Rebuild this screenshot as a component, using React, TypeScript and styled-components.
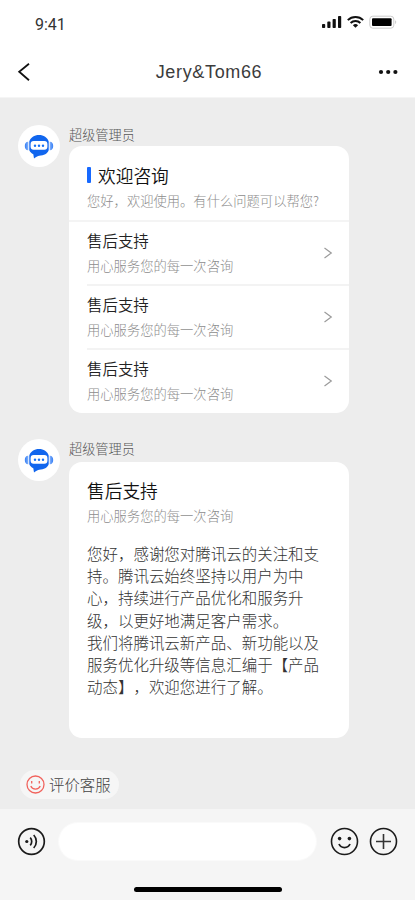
import React from 'react';
import styled, { createGlobalStyle } from 'styled-components';

const GlobalStyle = createGlobalStyle`
  * { box-sizing: border-box; }
  body { margin: 0; background: #ededed; }
  #root { width: 415px; }
`;

const Screen = styled.div`
  width: 415px;
  height: 900px;
  display: flex;
  flex-direction: column;
  overflow: hidden;
  background: #ededed;
  color: #222;
  font-family: 'Noto Sans CJK SC', sans-serif;
  font-weight: 300;
  text-spacing-trim: space-all;
`;

const StatusBar = styled.div`
  height: 48px;
  flex: none;
  display: flex;
  justify-content: space-between;
  padding: 14px 18px 0 35px;
  background: #fff;
`;

const Clock = styled.span`
  font: 400 16px/22px Roboto, sans-serif;
  color: #333;
`;

const StatusIcons = styled.div`
  display: flex;
  gap: 5px;
  height: 16px;
`;

const NavBar = styled.header`
  height: 50px;
  flex: none;
  display: grid;
  grid-template-columns: 60px 1fr 60px;
  align-items: center;
  background: #fff;
  border-bottom: 1px solid #f5f5f5;
`;

const NavButton = styled.button<{ $end?: boolean }>`
  display: flex;
  justify-content: ${p => (p.$end ? 'flex-end' : 'flex-start')};
  padding: 0 16px;
  margin-top: -2px;
  border: 0;
  background: none;
`;

const NavTitle = styled.h1`
  margin: 0 0 2px;
  text-align: center;
  font: 400 18px/24px 'Liberation Sans', sans-serif;
  letter-spacing: 0.65px;
  padding-left: 3px;
  color: #3c3c3c;
`;

const Thread = styled.main`
  flex: 1;
  padding: 27px 18px 0;
`;

const Message = styled.section<{ $last?: boolean }>`
  display: flex;
  gap: 9px;
  margin-bottom: ${p => (p.$last ? 32 : 26)}px;
`;

const Avatar = styled.div`
  width: 42px;
  height: 42px;
  flex: none;
  border-radius: 50%;
  background: #fff;
`;

const Bubble = styled.div`
  width: 280px;
`;

const Sender = styled.div<{ $gap: number }>`
  height: 20px;
  margin-bottom: ${p => p.$gap}px;
  font-size: 13.2px;
  line-height: 20px;
  color: #555;
`;

const Card = styled.div<{ $height: number }>`
  height: ${p => p.$height}px;
  border-radius: 13px;
  background: #fff;
  overflow: hidden;
`;

const CardHead = styled.div`
  height: 75.5px;
  padding: 16px 18px 0;
  border-bottom: 2px solid #f4f4f4;
`;

const Heading = styled.h2<{ $bar?: boolean }>`
  display: flex;
  align-items: center;
  gap: 7px;
  margin: 0 0 3px;
  font-size: 17.7px;
  line-height: 26px;
  font-weight: 350;
  color: #111;
  &::before {
    content: '';
    display: ${p => (p.$bar ? 'block' : 'none')};
    width: 4px;
    height: 16px;
    border-radius: 1px;
    background: #1769ff;
  }
`;

const Caption = styled.p`
  margin: 0;
  font-size: 13.3px;
  line-height: 20px;
  color: #8d8d8d;
  white-space: nowrap;
`;

const TopicRow = styled.div<{ $divided: boolean }>`
  height: 64.2px;
  margin-left: 18px;
  padding: 6px 16px 0 0;
  display: flex;
  justify-content: space-between;
  border-bottom: ${p => (p.$divided ? '2px solid #f3f3f3' : '0')};
  svg { margin-top: 18px; }
`;

const TopicTitle = styled.h3`
  margin: 0 0 4px;
  font-size: 15.45px;
  line-height: 24px;
  font-weight: 350;
  color: #222;
`;

const Article = styled.div`
  padding: 15px 18px 0;
`;

const Body = styled.div`
  margin-top: 16px;
  font-size: 15.48px;
  line-height: 22.2px;
  color: #333;
  white-space: pre;
`;

const RateButton = styled.button`
  display: flex;
  align-items: center;
  gap: 4px;
  width: 99px;
  height: 29px;
  margin-left: 2px;
  padding: 0 0 2px 6px;
  border: 0;
  border-radius: 15px;
  background: #f6f6f6;
  color: #444;
  font: 300 15.4px/24px 'Noto Sans CJK SC', sans-serif;
  white-space: nowrap;
  svg { margin-top: 2px; }
`;

const Composer = styled.footer`
  height: 91px;
  flex: none;
  display: flex;
  flex-direction: column;
  align-items: center;
  background: #f5f5f5;
`;

const InputRow = styled.div`
  width: 100%;
  display: flex;
  align-items: center;
  padding: 13px 17px 0;
`;

const TextInput = styled.input`
  width: 260px;
  height: 39px;
  margin: 0 13px 0 12px;
  padding: 0 16px;
  border: 1px solid #fafafa;
  border-radius: 20px;
  background: #fff;
  outline: none;
`;

const IconButton = styled.button<{ $gap?: number }>`
  display: flex;
  width: 29px;
  height: 29px;
  margin-right: ${p => p.$gap ?? 0}px;
  padding: 0;
  border: 0;
  background: none;
`;

const HomeIndicator = styled.div`
  width: 148px;
  height: 5px;
  margin: 26px 0 0 1px;
  border-radius: 3px;
  background: #000;
`;

const SignalIcon = () => (
  <svg width="20" height="14" viewBox="0 0 20 14" fill="#111">
    <rect x="0" y="10" width="3.2" height="4" rx="0.8" />
    <rect x="5.3" y="7.6" width="3.2" height="6.4" rx="0.8" />
    <rect x="10.6" y="5" width="3.2" height="9" rx="0.8" />
    <rect x="16" y="2" width="3.2" height="12" rx="0.8" />
  </svg>
);

const WifiIcon = () => (
  <svg width="17" height="14" viewBox="0 0 17 14" fill="none" stroke="#111" strokeWidth="2">
    <path d="M.8 6.1a11 11 0 0 1 15.4 0M3.6 9a7 7 0 0 1 9.8 0" />
    <path d="M8.5 13.8 5.9 11.2a3.8 3.8 0 0 1 5.2 0z" fill="#111" stroke="none" />
  </svg>
);

const BatteryIcon = () => (
  <svg width="28" height="16" viewBox="0 0 28 16">
    <rect x=".8" y="2.2" width="24" height="12" rx="3" fill="#fff" stroke="#ccc" />
    <rect x="3" y="4.3" width="19.6" height="7.8" rx="1" fill="#000" />
    <path d="M26.3 6.3c1.2.5 1.2 3.2 0 3.7z" fill="#bbb" />
  </svg>
);

const BackIcon = () => (
  <svg width="16" height="20" viewBox="0 0 16 20" fill="none" stroke="#111" strokeWidth="1.8">
    <path d="M13 1.7 3.2 9.7l9.8 8.5" />
  </svg>
);

const MoreIcon = () => (
  <svg width="21" height="6" viewBox="0 0 21 6" fill="#111">
    <circle cx="3" cy="3" r="2.1" />
    <circle cx="10.2" cy="3" r="2.1" />
    <circle cx="17.4" cy="3" r="2.1" />
  </svg>
);

const BotIcon = () => (
  <svg width="42" height="42" viewBox="0 0 42 42">
    <path d="M11.3 16.5C12.6 12.4 16.3 10 21 10s8.4 2.4 9.7 6.5v8.8c-1.3 3.4-4.6 5.3-9.5 5.4-1.4 0-2.5.8-5.2 2.8l-.7-4.2c-1.9-.9-3.2-2.3-4-4z" fill="#1166ee" />
    <path d="M10.2 16.8v8.4c-2.3-.1-3.4-1.5-3.4-4.2s1.1-4.1 3.4-4.2M31.8 16.8v8.4c2.3-.1 3.4-1.5 3.4-4.2s-1.1-4.1-3.4-4.2" fill="#4388f7" />
    <path d="M9.2 17v8M32.8 17v8" stroke="#b9d3fb" strokeWidth=".6" />
    <rect x="12.6" y="16" width="16.8" height="8.8" rx="3" fill="#fff" />
    <circle cx="17" cy="20.7" r="1.2" fill="#1470f5" />
    <circle cx="21" cy="20.7" r="1.2" fill="#1470f5" />
    <circle cx="25" cy="20.7" r="1.2" fill="#1470f5" />
  </svg>
);

const ChevronIcon = () => (
  <svg width="10" height="14" viewBox="0 0 10 14" fill="none" stroke="#9b9b9b" strokeWidth="1.2">
    <path d="m1.5 2 6.8 5-6.8 5" />
  </svg>
);

const RateFaceIcon = () => (
  <svg width="19" height="19" viewBox="0 0 19 19" fill="none" stroke="#f1635d" strokeWidth="1.3">
    <circle cx="9.5" cy="9.5" r="8.5" />
    <path d="M5.7 6v2.5M13.3 6v2.5M4.8 11.1c1.5 4 7.9 4 9.4 0" />
  </svg>
);

const VoiceIcon = () => (
  <svg width="29" height="29" viewBox="0 0 29 29" fill="none" stroke="#1b1b1b" strokeWidth="1.7">
    <circle cx="14.5" cy="14.5" r="12.8" />
    <circle cx="9.8" cy="14.5" r="1.6" fill="#1b1b1b" stroke="none" />
    <path d="M13.2 10.7c2 2 2 5.6 0 7.6M16.7 8c3.5 3.6 3.5 9.4 0 13" />
  </svg>
);

const SmileIcon = () => (
  <svg width="29" height="29" viewBox="0 0 29 29" fill="none" stroke="#1b1b1b" strokeWidth="1.6">
    <circle cx="14.5" cy="14.5" r="13" />
    <circle cx="9.6" cy="11.6" r="1.8" fill="#1b1b1b" stroke="none" />
    <circle cx="19.4" cy="11.6" r="1.8" fill="#1b1b1b" stroke="none" />
    <path d="M9 17c2 4.7 9 4.7 11 0" strokeWidth="1.8" />
  </svg>
);

const PlusIcon = () => (
  <svg width="29" height="29" viewBox="0 0 29 29" fill="none" stroke="#1b1b1b" strokeWidth="1.6">
    <circle cx="14.5" cy="14.5" r="13" />
    <path d="M14.5 7v15M7 14.5h15" stroke="#333" />
  </svg>
);

const topics = ['售后支持', '售后支持', '售后支持'];

const articleLines = [
  '您好，感谢您对腾讯云的关注和支',
  '持。腾讯云始终坚持以用户为中',
  '心，持续进行产品优化和服务升',
  '级，以更好地满足客户需求。',
  '我们将腾讯云新产品、新功能以及',
  '服务优化升级等信息汇编于【产品',
  '动态】，欢迎您进行了解。',
];

export default function App() {
  return (
    <Screen>
      <GlobalStyle />
      <StatusBar>
        <Clock>9:41</Clock>
        <StatusIcons>
          <SignalIcon />
          <WifiIcon />
          <BatteryIcon />
        </StatusIcons>
      </StatusBar>
      <NavBar>
        <NavButton aria-label="返回"><BackIcon /></NavButton>
        <NavTitle>Jery&amp;Tom66</NavTitle>
        <NavButton $end aria-label="更多"><MoreIcon /></NavButton>
      </NavBar>
      <Thread>
        <Message>
          <Avatar><BotIcon /></Avatar>
          <Bubble>
            <Sender $gap={1}>超级管理员</Sender>
            <Card $height={267}>
              <CardHead>
                <Heading $bar>欢迎咨询</Heading>
                <Caption>您好，欢迎使用。有什么问题可以帮您?</Caption>
              </CardHead>
              {topics.map((title, i) => (
                <TopicRow key={i} $divided={i < topics.length - 1}>
                  <div>
                    <TopicTitle>{title}</TopicTitle>
                    <Caption>用心服务您的每一次咨询</Caption>
                  </div>
                  <ChevronIcon />
                </TopicRow>
              ))}
            </Card>
          </Bubble>
        </Message>
        <Message $last>
          <Avatar><BotIcon /></Avatar>
          <Bubble>
            <Sender $gap={3}>超级管理员</Sender>
            <Card $height={276}>
              <Article>
                <Heading>售后支持</Heading>
                <Caption>用心服务您的每一次咨询</Caption>
                <Body>{articleLines.join('\n')}</Body>
              </Article>
            </Card>
          </Bubble>
        </Message>
        <RateButton><RateFaceIcon />评价客服</RateButton>
      </Thread>
      <Composer>
        <InputRow>
          <IconButton aria-label="语音"><VoiceIcon /></IconButton>
          <TextInput aria-label="消息" />
          <IconButton $gap={10} aria-label="表情"><SmileIcon /></IconButton>
          <IconButton aria-label="添加"><PlusIcon /></IconButton>
        </InputRow>
        <HomeIndicator />
      </Composer>
    </Screen>
  );
}
